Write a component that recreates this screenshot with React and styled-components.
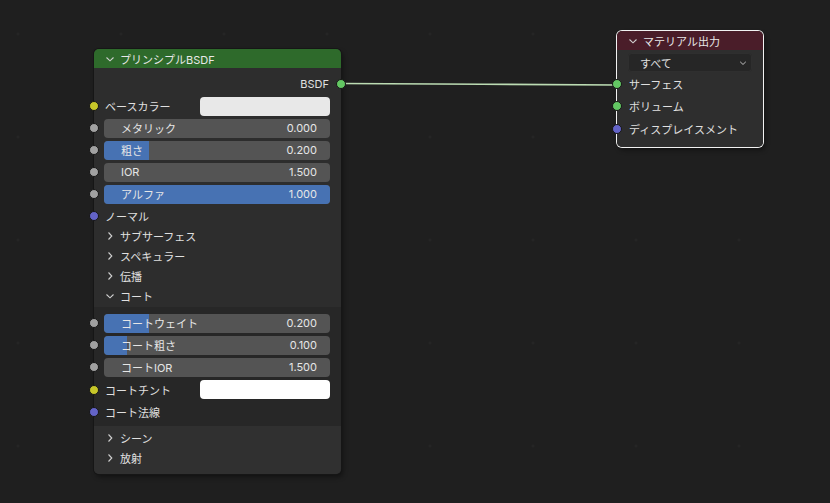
import React from "react";
import styled, { createGlobalStyle } from "styled-components";

const Global = createGlobalStyle`
  html, body {
    margin: 0;
    padding: 0;
    background: #1f1f1f;
  }
  body {
    font-family: "Inter", "Noto Sans CJK JP", sans-serif;
    font-size: 11px;
    color: #e2e2e2;
  }
`;

const Canvas = styled.div`
  position: relative;
  width: 830px;
  height: 503px;
  overflow: hidden;
  background-color: #1f1f1f;
  background-image: radial-gradient(circle, #2a2a2a 0.8px, transparent 1.4px);
  background-size: 103px 103px;
  background-position: -33.5px -17.5px;
`;

const Links = styled.svg`
  position: absolute;
  left: 0;
  top: 0;
  width: 830px;
  height: 503px;
  pointer-events: none;
`;

const Node = styled.div`
  position: absolute;
  left: ${(p) => p.$x}px;
  top: ${(p) => p.$y}px;
  width: ${(p) => p.$w}px;
  display: flex;
  flex-direction: column;
  background: #2d2d2d;
  border-radius: 5px;
  box-shadow: 0 0 0 1px ${(p) => (p.$selected ? "#f2f2f2" : "#161616")},
    2px 3px 5px rgba(0, 0, 0, 0.45);
`;

const Header = styled.div`
  height: 19px;
  display: flex;
  align-items: center;
  gap: 5px;
  padding-left: ${(p) => p.$pad}px;
  background: ${(p) => p.$color};
  border-radius: 5px 5px 0 0;
  color: #e8e8e8;
  font-size: 11px;
`;

const Section = styled.div`
  display: flex;
  flex-direction: column;
  padding: ${(p) => p.$pad};
  background: ${(p) => p.$bg || "transparent"};
  border-radius: ${(p) => (p.$last ? "0 0 5px 5px" : "0")};
`;

const Row = styled.div`
  position: relative;
  height: ${(p) => p.$h || 22}px;
  display: flex;
  align-items: center;
  justify-content: ${(p) => (p.$right ? "flex-end" : "flex-start")};
  padding: 0 ${(p) => p.$pr || 11}px 0 ${(p) => p.$pl || 11}px;
  box-sizing: border-box;
`;

const Socket = styled.span`
  position: absolute;
  top: 50%;
  ${(p) => (p.$side === "right" ? "right: -5px;" : "left: -5px;")}
  width: 8px;
  height: 8px;
  margin-top: -5px;
  border-radius: 50%;
  background: ${(p) => p.$color};
  border: 1px solid #161616;
`;

const Label = styled.span`
  color: #e0e0e0;
  white-space: nowrap;
`;

const ColorField = styled.div`
  margin-left: auto;
  width: 130px;
  height: 19px;
  border-radius: 4px;
  background: ${(p) => p.$color};
`;

const Slider = styled.div`
  position: relative;
  flex: 1;
  height: 19px;
  border-radius: 4px;
  background: #545454;
  overflow: hidden;
  display: flex;
  align-items: center;
  justify-content: space-between;
  padding: 0 13px 0 17px;
  box-sizing: border-box;
`;

const Fill = styled.div`
  position: absolute;
  left: 0;
  top: 0;
  bottom: 0;
  background: #4772b3;
`;

const SliderText = styled.span`
  position: relative;
  color: #e6e6e6;
  white-space: nowrap;
`;

const PanelRow = styled.div`
  height: 20px;
  display: flex;
  align-items: center;
  gap: 5px;
  padding-left: 11px;
  color: #e0e0e0;
`;

const Chevron = styled.svg`
  width: ${(p) => p.$size || 10}px;
  height: ${(p) => p.$size || 10}px;
  flex: none;
`;

const Dropdown = styled.div`
  margin: 3px 11px 1px 11px;
  height: 19px;
  border-radius: 4px;
  background: #262626;
  box-shadow: inset 0 0 0 1px #2f2f2f;
  display: flex;
  align-items: center;
  justify-content: space-between;
  padding: 0 5px 0 12px;
  color: #e0e0e0;
`;

const SOCK = {
  yellow: "#c7c729",
  gray: "#a1a1a1",
  purple: "#6363c7",
  green: "#63c763",
};

function Arrow({ open, size }) {
  return (
    <Chevron viewBox="0 0 10 10" $size={size}>
      {open ? (
        <polyline points="1.5,3.5 5,6.8 8.5,3.5" fill="none" stroke="#d0d0d0" strokeWidth="1.1" />
      ) : (
        <polyline points="3.5,1.5 6.8,5 3.5,8.5" fill="none" stroke="#d0d0d0" strokeWidth="1.1" />
      )}
    </Chevron>
  );
}

function SliderRow({ label, value, fill }) {
  return (
    <Row $pl={10}>
      <Socket $color={SOCK.gray} />
      <Slider>
        <Fill style={{ width: `${fill * 100}%` }} />
        <SliderText>{label}</SliderText>
        <SliderText>{value}</SliderText>
      </Slider>
    </Row>
  );
}

function Panel({ label, open }) {
  return (
    <PanelRow>
      <Arrow open={open} />
      <span>{label}</span>
    </PanelRow>
  );
}

export default function App() {
  return (
    <Canvas>
      <Global />
      <Links viewBox="0 0 830 503">
        <path d="M341 83.5 C 450 83.5, 510 85, 617 85" fill="none" stroke="#bcdcb3" strokeWidth="1.6" />
      </Links>

      <Node $x={94} $y={49} $w={247}>
        <Header $color="#2e6a2b" $pad={11}>
          <Arrow open />
          <span>プリンシプルBSDF</span>
        </Header>
        <Section $pad="5px 0 1px 0">
          <Row $right $pr={12}>
            <Label>BSDF</Label>
            <Socket $side="right" $color={SOCK.green} />
          </Row>
          <Row>
            <Socket $color={SOCK.yellow} />
            <Label>ベースカラー</Label>
            <ColorField $color="#e8e8e8" />
          </Row>
          <SliderRow label="メタリック" value="0.000" fill={0} />
          <SliderRow label="粗さ" value="0.200" fill={0.2} />
          <SliderRow label="IOR" value="1.500" fill={0} />
          <SliderRow label="アルファ" value="1.000" fill={1} />
          <Row $h={21}>
            <Socket $color={SOCK.purple} />
            <Label>ノーマル</Label>
          </Row>
          <Panel label="サブサーフェス" />
          <Panel label="スペキュラー" />
          <Panel label="伝播" />
          <Panel label="コート" open />
        </Section>
        <Section $pad="5px 0 3px 0" $bg="#272727">
          <SliderRow label="コートウェイト" value="0.200" fill={0.2} />
          <SliderRow label="コート粗さ" value="0.100" fill={0.1} />
          <SliderRow label="コートIOR" value="1.500" fill={0} />
          <Row $h={23}>
            <Socket $color={SOCK.yellow} />
            <Label>コートチント</Label>
            <ColorField $color="#ffffff" />
          </Row>
          <Row>
            <Socket $color={SOCK.purple} />
            <Label>コート法線</Label>
          </Row>
        </Section>
        <Section $pad="2px 0 6px 0" $bg="#303030" $last>
          <Panel label="シーン" />
          <Panel label="放射" />
        </Section>
      </Node>

      <Node $x={617} $y={31} $w={146} $selected>
        <Header $color="#4a1d29" $pad={11}>
          <Arrow open />
          <span>マテリアル出力</span>
        </Header>
        <Section $pad="0 0 7px 0" $bg="#2e2e2e" $last>
          <Dropdown>
            <span>すべて</span>
            <Arrow open size={8} />
          </Dropdown>
          <Row $pl={12}>
            <Socket $color={SOCK.green} />
            <Label>サーフェス</Label>
          </Row>
          <Row $pl={12}>
            <Socket $color={SOCK.green} />
            <Label>ボリューム</Label>
          </Row>
          <Row $pl={12} $h={23}>
            <Socket $color={SOCK.purple} />
            <Label>ディスプレイスメント</Label>
          </Row>
        </Section>
      </Node>
    </Canvas>
  );
}
